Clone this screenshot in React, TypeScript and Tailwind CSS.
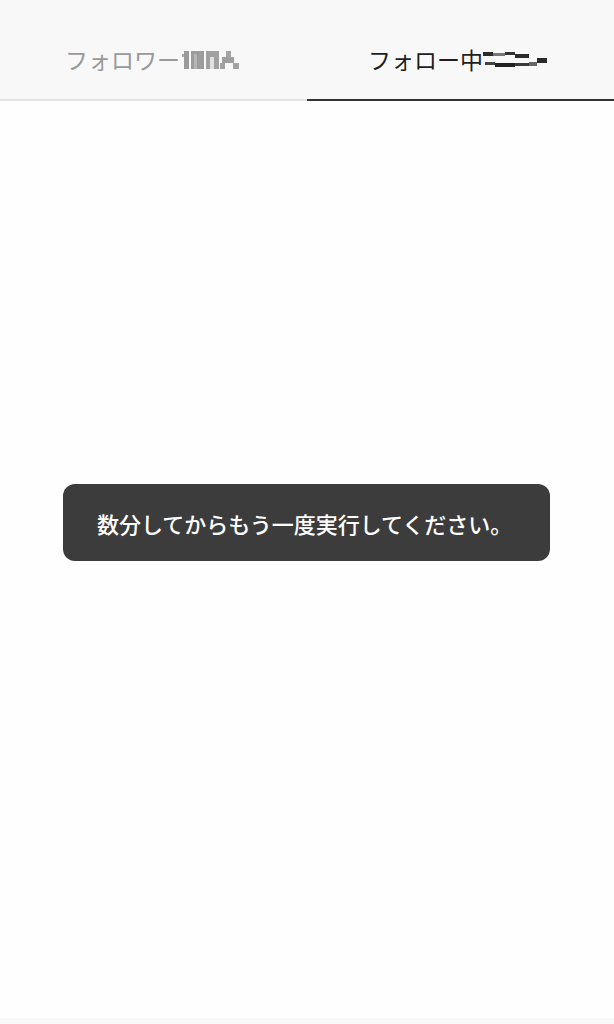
const font = { fontFamily: '"Noto Sans CJK JP", "Noto Sans", sans-serif' };

function MosaicLeft() {
  return (
    <svg width="60" height="22" viewBox="0 0 60 22" className="ml-[2px]">
      <rect x="0" y="5" width="4" height="3" fill="#a8a8a8" />
      <rect x="2" y="2" width="5" height="18" fill="#9a9a9a" />
      <rect x="9" y="2" width="13" height="18" fill="#9c9c9c" />
      <rect x="12" y="5" width="3" height="15" fill="#b5b5b5" />
      <rect x="24" y="2" width="13" height="18" fill="#a0a0a0" />
      <rect x="28" y="8" width="4" height="12" fill="#e0e0e0" />
      <rect x="44" y="2" width="5" height="6" fill="#a4a4a4" />
      <rect x="40" y="8" width="12" height="6" fill="#9e9e9e" />
      <rect x="38" y="14" width="5" height="6" fill="#a2a2a2" />
      <rect x="51" y="14" width="6" height="6" fill="#a2a2a2" />
    </svg>
  );
}

function MosaicRight() {
  return (
    <svg width="70" height="22" viewBox="0 0 70 22">
      <rect x="0" y="3" width="10" height="4" fill="#2a2a2a" />
      <rect x="10" y="4" width="12" height="3" fill="#777" />
      <rect x="22" y="3" width="10" height="3" fill="#333" />
      <rect x="32" y="5" width="14" height="4" fill="#2a2a2a" />
      <rect x="2" y="13" width="10" height="3" fill="#444" />
      <rect x="12" y="14" width="20" height="4" fill="#222" />
      <rect x="32" y="14" width="14" height="3" fill="#3a3a3a" />
      <rect x="46" y="13" width="8" height="4" fill="#666" />
      <rect x="54" y="9" width="10" height="5" fill="#2a2a2a" />
    </svg>
  );
}

export default function App() {
  return (
    <div className="relative flex h-[1024px] w-[614px] flex-col bg-[#fefefe]" style={font}>
      <div className="flex h-[101px] bg-[#f8f8f8]">
        <div className="flex flex-1 items-center justify-center border-b-2 border-[#e6e6e6] pt-[20px]">
          <span className="text-[23px] leading-none text-[#999999]">フォロワー</span>
          <MosaicLeft />
        </div>
        <div className="flex flex-1 items-center justify-center border-b-2 border-[#333333] pt-[20px]">
          <span className="text-[23px] leading-none text-[#1e1e1e]">フォロー中</span>
          <MosaicRight />
        </div>
      </div>

      <div className="flex-1" />
      <div className="h-[6px] bg-[#f8f8f8]" />

      <div className="absolute left-[63px] top-[484px] flex h-[77px] w-[487px] items-center rounded-[12px] bg-[#3c3c3c] pl-[34px]">
        <span className="text-[22px] font-medium leading-none text-white">
          数分してからもう一度実行してください。
        </span>
      </div>
    </div>
  );
}
